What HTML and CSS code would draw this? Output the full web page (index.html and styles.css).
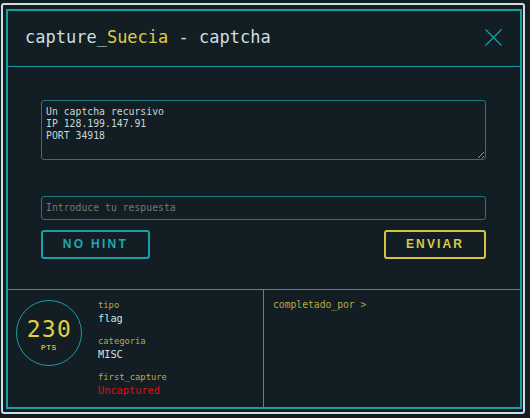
FILE: index.html
```html
<!DOCTYPE html>
<html lang="es">
<head>
<meta charset="utf-8">
<title>capture_Suecia - captcha</title>
<link rel="stylesheet" href="styles.css">
</head>
<body>
<div class="frame">
  <div class="modal">
    <header class="head">
      <h1 class="title">capture_<span class="hl">Suecia</span> - captcha</h1>
      <button class="close" aria-label="Cerrar">
        <svg width="17" height="17" viewBox="0 0 17 17"><path d="M0.5 0.5 L16.5 16.5 M16.5 0.5 L0.5 16.5" stroke="#1a9ea4" stroke-width="1.2" fill="none"/></svg>
      </button>
    </header>
    <section class="body">
      <textarea class="desc" readonly>Un captcha recursivo
IP 128.199.147.91
PORT 34918</textarea>
      <input class="answer" type="text" placeholder="Introduce tu respuesta">
      <div class="actions">
        <button class="btn hint">NO HINT</button>
        <button class="btn send">ENVIAR</button>
      </div>
    </section>
    <footer class="foot">
      <div class="info">
        <div class="points">
          <span class="num">230</span>
          <span class="pts">PTS</span>
        </div>
        <dl class="meta">
          <dt>tipo</dt>
          <dd>flag</dd>
          <dt>categoria</dt>
          <dd>MISC</dd>
          <dt>first_capture</dt>
          <dd class="red">Uncaptured</dd>
        </dl>
      </div>
      <div class="solvers">completado_por &gt;</div>
    </footer>
  </div>
</div>
</body>
</html>
```
FILE: styles.css
```css
* { box-sizing: border-box; }
html, body { margin: 0; padding: 0; background: #121e23; }
body { font-family: "DejaVu Sans Mono", monospace; color: #cfdcdc; }

.frame {
  width: 524px;
  height: 411px;
  margin: 3px 0 0 1px;
  border: 2px solid #cbe0e0;
  border-radius: 3px;
  padding: 4px 1px 3px 3px;
}
.modal {
  height: 100%;
  border: 2px solid #1a9ea4;
  display: flex;
  flex-direction: column;
}
.head {
  height: 56px;
  border-bottom: 1px solid #1a9ea4;
  display: flex;
  align-items: center;
  justify-content: space-between;
  padding: 0 18px 0 17px;
}
.title {
  margin: 0;
  font-family: "DejaVu Sans Mono", monospace;
  font-weight: normal;
  font-size: 17px;
  color: #cfdfe0;
  padding-bottom: 2px;
}
.hl { color: #dccb47; }
.close {
  background: none;
  border: 0;
  padding: 0;
  width: 17px;
  height: 17px;
  display: block;
  margin-bottom: 1px;
}
.close svg { display: block; }

.body {
  height: 225px;
  border-bottom: 1px solid #1a9ea4;
  padding: 33px 34px 0 33px;
  display: flex;
  flex-direction: column;
}
.desc {
  height: 60px;
  width: 100%;
  background: #121e23;
  border: 1px solid #1d7b80;
  border-radius: 3px;
  padding: 5px 4px;
  font-family: "DejaVu Sans Mono", monospace;
  font-size: 9.8px;
  line-height: 12px;
  color: #c9d5d5;
  outline: none;
  display: block;
}
.answer {
  margin-top: 36px;
  height: 24px;
  width: 100%;
  background: #121e23;
  border: 1px solid #1d7b80;
  border-radius: 3px;
  padding: 0 4px;
  font-family: "DejaVu Sans Mono", monospace;
  font-size: 9.8px;
  color: #c9d5d5;
  outline: none;
}
.answer::placeholder { color: #6e797b; }
.actions {
  margin-top: 10px;
  display: flex;
  justify-content: space-between;
}
.btn {
  height: 29px;
  background: transparent;
  border: 2px solid;
  border-radius: 3px;
  font-family: "Liberation Sans", Arial, sans-serif;
  font-weight: bold;
  font-size: 12px;
  padding: 0;
  cursor: pointer;
}
.hint {
  width: 109px;
  border-color: #1b9ea6;
  color: #1fa7ae;
  letter-spacing: 2.3px;
}
.send {
  width: 102px;
  border-color: #d6c53c;
  color: #dccb47;
  letter-spacing: 2.1px;
}

.foot {
  flex: 1;
  display: flex;
}
.info {
  width: 256px;
  border-right: 1px solid #1a9ea4;
  display: flex;
  padding: 9px 0 0 8px;
}
.points {
  width: 66px;
  height: 66px;
  margin-top: 1px;
  border: 1px solid #1a9ea4;
  border-radius: 50%;
  display: flex;
  flex-direction: column;
  align-items: center;
  justify-content: center;
  flex: none;
}
.num {
  font-family: "DejaVu Sans Mono", monospace;
  font-size: 23px;
  line-height: 24px;
  letter-spacing: 1.4px;
  margin-left: 1px;
  color: #e0cf45;
  margin-top: 2px;
}
.pts {
  font-family: "Liberation Sans", Arial, sans-serif;
  font-size: 7px;
  line-height: 9px;
  font-weight: bold;
  letter-spacing: 0.8px;
  color: #c7b844;
  margin-top: 2px;
}
.meta {
  margin: 0 0 0 16px;
}
.meta dt {
  font-size: 8.8px;
  line-height: 12px;
  color: #b9ab3e;
}
.meta dd {
  margin: 1px 0 10px 0;
  font-size: 10.3px;
  line-height: 13px;
  color: #d3e0e0;
}
.meta dd.red { color: #d21515; }

.solvers {
  flex: 1;
  padding: 9px 0 0 9px;
  font-size: 9.7px;
  line-height: 12px;
  color: #b9ab3e;
}
```
